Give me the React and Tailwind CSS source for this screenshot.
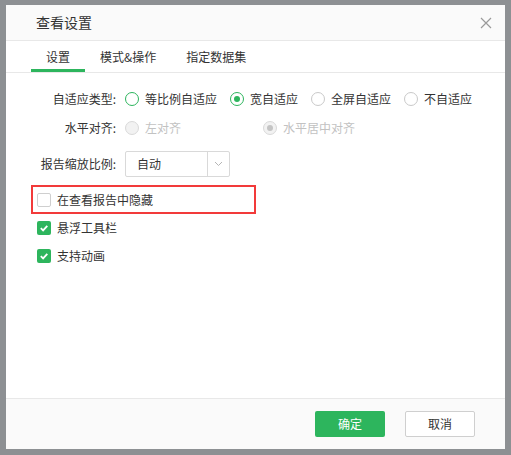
import { useState } from "react"

function Radio({ checked, disabled, accent, label, onClick }) {
  let ring = "border-[#c9c9c9] bg-white"
  if (disabled) ring = "border-[#d9d9d9] bg-[#f2f2f2]"
  else if (checked || accent) ring = "border-[#2db55d] bg-white"
  return (
    <button
      type="button"
      onClick={onClick}
      disabled={disabled}
      className="flex items-center gap-[6px] h-[20px]"
    >
      <span className={`w-[14px] h-[14px] rounded-full border flex items-center justify-center ${ring}`}>
        {checked && (
          <span className={`w-[6px] h-[6px] rounded-full ${disabled ? "bg-[#c4c4c4]" : "bg-[#2db55d]"}`} />
        )}
      </span>
      <span className={disabled ? "text-[#c2c2c2]" : "text-[#333]"}>{label}</span>
    </button>
  )
}

function Checkbox({ checked, label, onClick }) {
  return (
    <button type="button" onClick={onClick} className="flex items-center gap-[6px] h-[20px]">
      <span
        className={`w-[14px] h-[14px] rounded-[2px] flex items-center justify-center ${
          checked ? "bg-[#2db55d]" : "border border-[#cfcfcf] bg-white"
        }`}
      >
        {checked && (
          <svg width="10" height="10" viewBox="0 0 10 10">
            <path d="M1.8 5.2 L4.1 7.4 L8.3 2.8" fill="none" stroke="#fff" strokeWidth="1.8" />
          </svg>
        )}
      </span>
      <span className="text-[#333]">{label}</span>
    </button>
  )
}

export default function App() {
  const [tab, setTab] = useState(0)
  const [fit, setFit] = useState(1)
  const [hide, setHide] = useState(false)
  const [toolbar, setToolbar] = useState(true)
  const [anim, setAnim] = useState(true)

  const tabs = ["设置", "模式&操作", "指定数据集"]
  const fits = ["等比例自适应", "宽自适应", "全屏自适应", "不自适应"]

  return (
    <div
      className="w-[511px] h-[455px] bg-[#8d9093] pt-[5px] pl-[6px] text-[12px]"
      style={{ fontFamily: '"Noto Sans CJK SC", "Noto Sans", sans-serif' }}
    >
      <div className="w-[499px] h-[444px] bg-white flex flex-col">
        {/* header */}
        <div className="h-[36px] bg-[#fafafa] border-b border-[#e8e8e8] flex items-center justify-between pl-[30px] pr-[13px]">
          <span className="text-[14px] text-[#333]">查看设置</span>
          <svg width="12" height="12" viewBox="0 0 12 12">
            <path d="M1 1 L11 11 M11 1 L1 11" stroke="#9a9a9a" strokeWidth="1.2" />
          </svg>
        </div>

        {/* tabs */}
        <div className="h-[32px] border-b border-[#e8e8e8] flex pl-[25px]">
          {tabs.map((t, i) => (
            <button
              key={t}
              type="button"
              onClick={() => setTab(i)}
              className="h-full px-[15px] flex items-center relative text-[#333]"
            >
              {t}
              {tab === i && <span className="absolute left-0 right-0 bottom-0 h-[3px] bg-[#2db55d]" />}
            </button>
          ))}
        </div>

        {/* body */}
        <div className="flex-1 flex flex-col pt-[16px]">
          <div className="flex items-center">
            <div className="w-[110px] text-right text-[#333]">自适应类型:</div>
            <div className="flex items-center gap-[13px] ml-[9px]">
              {fits.map((f, i) => (
                <Radio key={f} label={f} accent={i === 0} checked={fit === i} onClick={() => setFit(i)} />
              ))}
            </div>
          </div>

          <div className="flex items-center mt-[9px]">
            <div className="w-[110px] text-right text-[#333]">水平对齐:</div>
            <div className="flex items-center ml-[9px]">
              <div className="w-[138px]">
                <Radio label="左对齐" disabled />
              </div>
              <Radio label="水平居中对齐" disabled checked />
            </div>
          </div>

          <div className="flex items-center mt-[13px]">
            <div className="w-[110px] text-right text-[#333]">报告缩放比例:</div>
            <div className="ml-[9px] w-[105px] h-[26px] border border-[#d9d9d9] rounded-[2px] flex">
              <span className="flex-1 flex items-center pl-[11px] text-[#333]">自动</span>
              <span className="w-[22px] border-l border-[#d9d9d9] flex items-center justify-center">
                <svg width="9" height="6" viewBox="0 0 9 6">
                  <path d="M1 1 L4.5 4.5 L8 1" fill="none" stroke="#b5b5b5" strokeWidth="1" />
                </svg>
              </span>
            </div>
          </div>

          <div className="ml-[25px] mt-[8px] w-[225px] h-[29px] border-2 border-[#f23a3a] flex items-center pl-[4px]">
            <Checkbox label="在查看报告中隐藏" checked={hide} onClick={() => setHide(!hide)} />
          </div>

          <div className="ml-[31px] mt-[4px]">
            <Checkbox label="悬浮工具栏" checked={toolbar} onClick={() => setToolbar(!toolbar)} />
          </div>
          <div className="ml-[31px] mt-[8px]">
            <Checkbox label="支持动画" checked={anim} onClick={() => setAnim(!anim)} />
          </div>
        </div>

        {/* footer */}
        <div className="h-[51px] bg-[#fafafa] border-t border-[#e8e8e8] flex items-center justify-end gap-[20px] pr-[30px]">
          <button type="button" className="w-[70px] h-[26px] rounded-[2px] bg-[#2db55d] text-white">
            确定
          </button>
          <button type="button" className="w-[70px] h-[26px] rounded-[2px] bg-white border border-[#cfcfcf] text-[#333]">
            取消
          </button>
        </div>
      </div>
    </div>
  )
}
